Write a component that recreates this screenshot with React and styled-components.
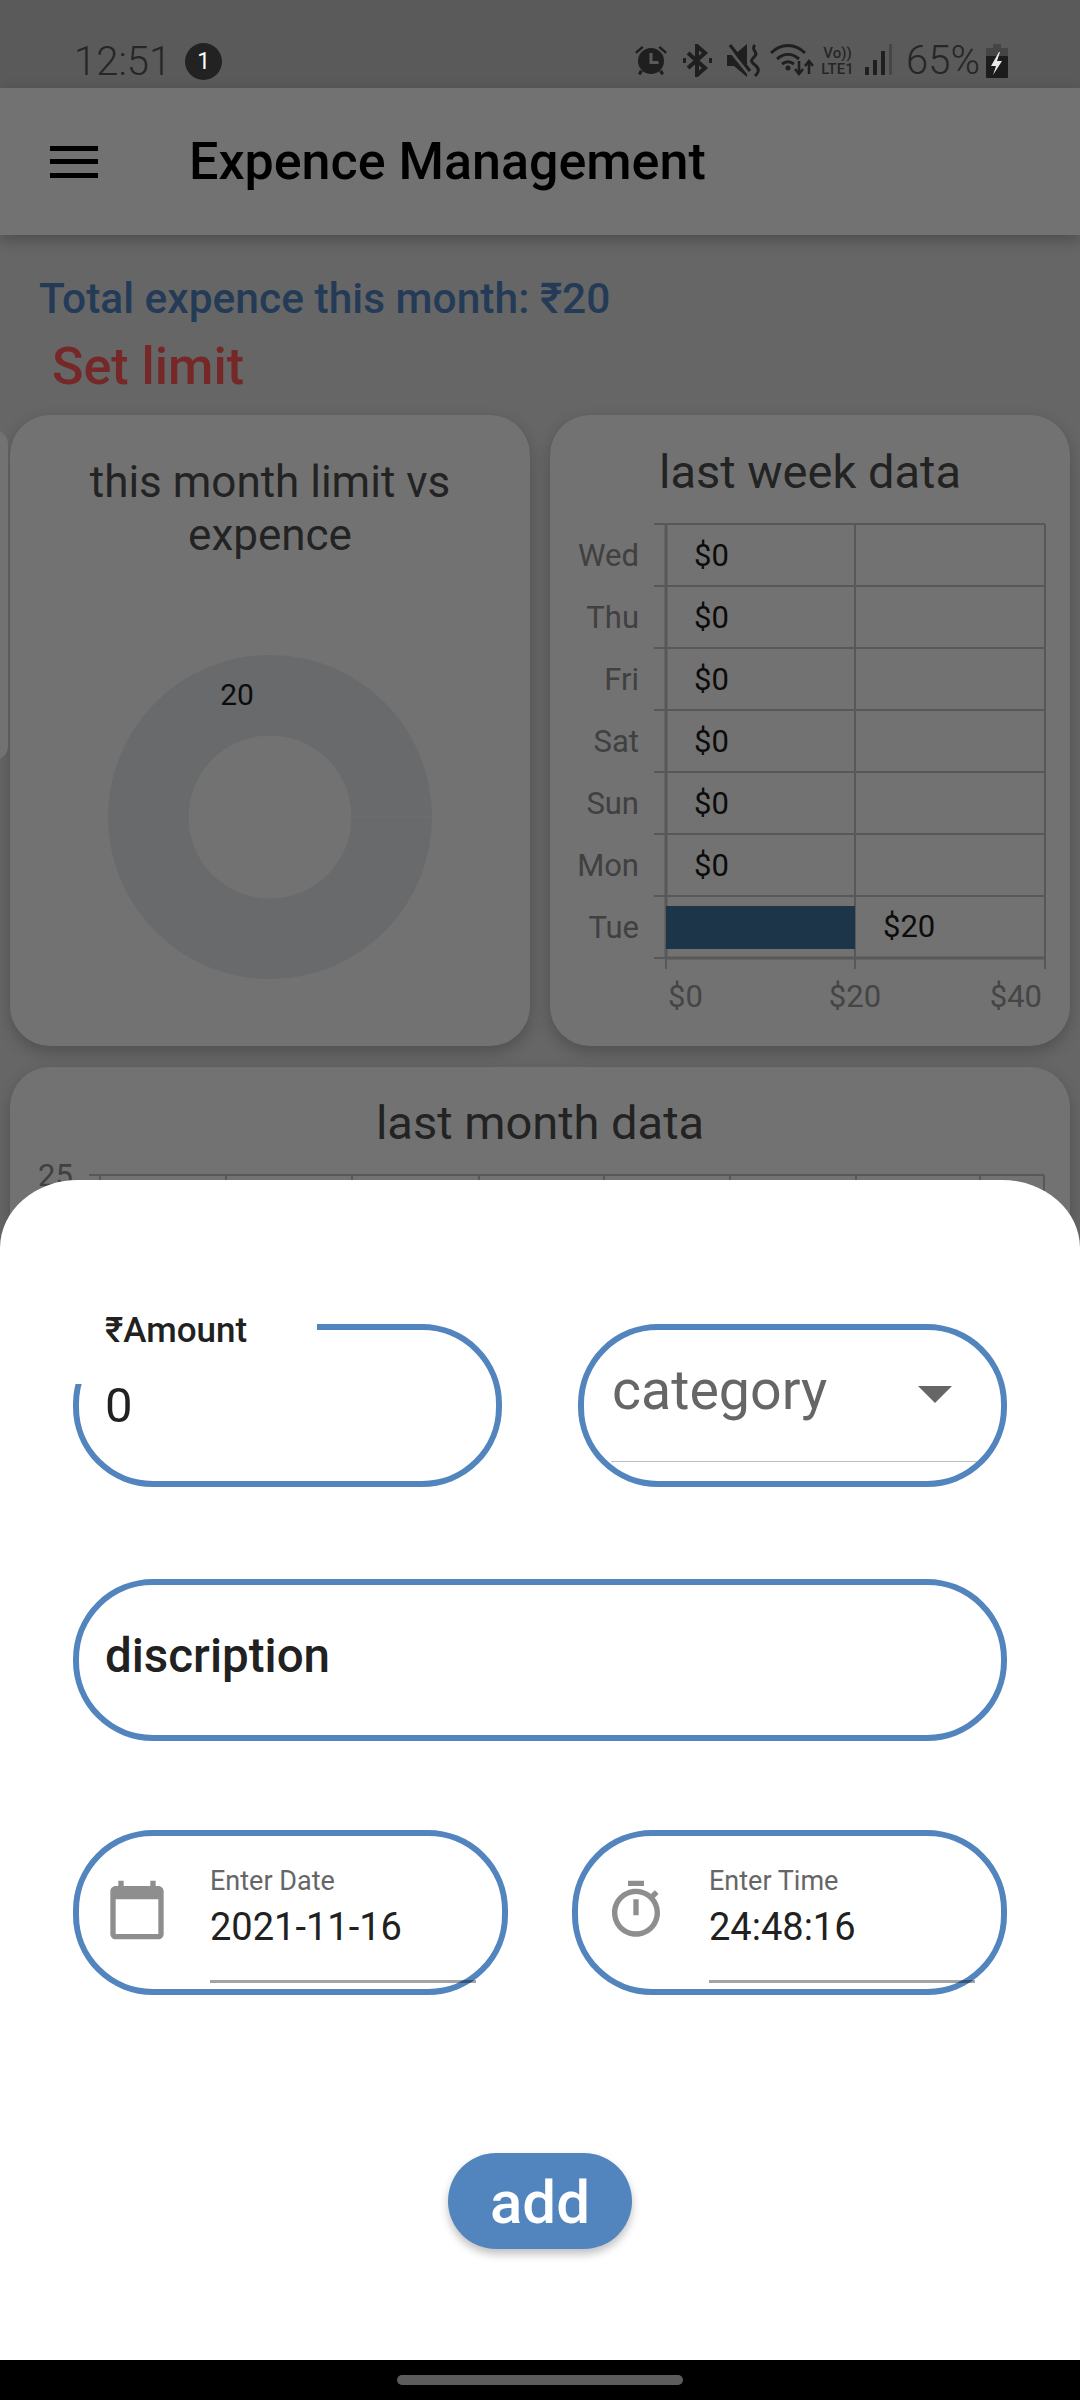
import React from 'react';
import styled, {createGlobalStyle} from 'styled-components';

const BLUE = '#5284be';
const DAYS = ['Wed', 'Thu', 'Fri', 'Sat', 'Sun', 'Mon', 'Tue'];

const GlobalStyle = createGlobalStyle`
  html, body { margin: 0; padding: 0; background: #000; }
  body { font-family: Roboto, "Noto Sans", sans-serif; }
  * { box-sizing: border-box; }
`;

const Screen = styled.div`
  position: relative;
  width: 1080px;
  height: 2400px;
  overflow: hidden;
  background: #666666;
`;

/* status bar */
const StatusBar = styled.div`
  height: 88px;
  padding: 43px 72px 0 74px;
  display: flex;
  align-items: flex-start;
  background: #5a5a5a;
  color: #262626;
`;

const Clock = styled.div`
  font-size: 40px;
  font-weight: 300;
  line-height: 37px;
`;

const Badge = styled.div`
  width: 37px;
  height: 37px;
  margin-left: 14px;
  border-radius: 50%;
  background: #222;
  color: #fff;
  font-size: 23px;
  line-height: 37px;
  text-align: center;
`;

const StatusIcons = styled.div`
  margin-left: auto;
  display: flex;
  align-items: flex-start;
  height: 36px;
  padding-top: 1px;
`;

const Slot = styled.span`
  display: block;
  margin-left: ${props => props.$gap || 0}px;
  svg { display: block; }
`;

const VoLte = styled.span`
  display: block;
  width: 39px;
  margin-left: 4px;
  margin-top: 1px;
  text-align: center;
  font-size: 15px;
  font-weight: 500;
  line-height: 16px;
  white-space: nowrap;
`;

const Percent = styled.span`
  display: block;
  margin-left: 14px;
  margin-top: -2px;
  font-size: 40px;
  font-weight: 300;
  line-height: 38px;
`;

/* app bar */
const AppBar = styled.div`
  position: relative;
  height: 147px;
  padding-left: 50px;
  display: flex;
  align-items: center;
  background: #727272;
  box-shadow: 0 5px 14px rgba(0, 0, 0, 0.25);
`;

const MenuIcon = styled.div`
  width: 48px;
  height: 32px;
  display: flex;
  flex-direction: column;
  justify-content: space-between;
  span {
    height: 5px;
    background: #000;
  }
`;

const Title = styled.div`
  margin-left: 91px;
  font-size: 52px;
  font-weight: 500;
  color: #000;
`;

/* summary */
const Summary = styled.div`
  padding: 41px 0 0 39px;
  height: 180px;
`;

const TotalText = styled.div`
  font-size: 42.5px;
  font-weight: 500;
  line-height: 45px;
  color: #243b58;
`;

const SetLimit = styled.div`
  margin: 17px 0 0 13px;
  font-size: 52px;
  font-weight: 500;
  line-height: 58px;
  color: #762727;
`;

/* dashboard cards */
const EdgeCard = styled.div`
  position: absolute;
  left: -20px;
  top: 430px;
  width: 28px;
  height: 330px;
  border-radius: 14px;
  background: #727272;
`;

const CardGrid = styled.div`
  display: grid;
  grid-template-columns: 520px 520px;
  column-gap: 20px;
  padding: 0 10px;
`;

const Card = styled.div`
  height: ${props => props.$height}px;
  padding-top: ${props => props.$pad}px;
  border-radius: 40px;
  background: #727272;
  box-shadow: 0 6px 16px rgba(0, 0, 0, 0.22);
  text-align: center;
  color: #232323;
  font-size: ${props => props.$font || 44}px;
  line-height: 53px;
`;

const WideCard = styled(Card)`
  margin: 21px 10px 0;
  svg { display: block; margin-top: 10px; }
`;

const ChartSvg = styled.svg`
  display: block;
  margin: ${props => props.$top}px auto 0;
`;

const Donut = () => (
  <ChartSvg $top={93} width="324" height="324" viewBox="0 0 324 324">
    <path
      fillRule="evenodd"
      fill="#696a6c"
      d="M162 0a162 162 0 1 1 0 324a162 162 0 1 1 0-324zM162 80.5a81.5 81.5 0 1 0 0 163a81.5 81.5 0 1 0 0-163z"
    />
    <line x1="243" y1="162" x2="324" y2="162" stroke="#6f6f70" strokeWidth="1" />
    <text x="129" y="50" textAnchor="middle" fontSize="30" fontFamily="Roboto" fill="#0c0c0c">20</text>
  </ChartSvg>
);

const WeekChart = () => {
  const rows = DAYS.map((d, i) => 26 + i * 62);
  return (
    <ChartSvg $top={0} width="520" height="530" viewBox="0 0 520 530">
      <g stroke="#585858" strokeWidth="2" fill="none">
        {[...rows, 26 + 7 * 62].map(y => (
          <line key={y} x1="104" y1={y} x2="495" y2={y} />
        ))}
        <line x1="116" y1="26" x2="116" y2="460" strokeWidth="3" />
        <line x1="305" y1="26" x2="305" y2="471" />
        <line x1="495" y1="26" x2="495" y2="471" />
        <line x1="116" y1="460" x2="116" y2="471" />
        <line x1="116" y1="460" x2="495" y2="460" strokeWidth="3" />
      </g>
      <rect x="116" y="408" width="189" height="43" fill="#1d3549" />
      <g fontFamily="Roboto" fontSize="31">
        {DAYS.map((d, i) => (
          <text key={d} x="89" y={68 + i * 62} textAnchor="end" fill="#404040">{d}</text>
        ))}
        {DAYS.slice(0, 6).map((d, i) => (
          <text key={d} x="144" y={68 + i * 62} fill="#0c0c0c">$0</text>
        ))}
        <text x="333" y="439" fill="#0c0c0c">$20</text>
        <text x="118" y="509" fill="#454545">$0</text>
        <text x="305" y="509" textAnchor="middle" fill="#454545">$20</text>
        <text x="492" y="509" textAnchor="end" fill="#454545">$40</text>
      </g>
    </ChartSvg>
  );
};

const MonthChart = () => (
  <svg width="1060" height="60" viewBox="0 0 1060 60">
    <g stroke="#585858" strokeWidth="2">
      <line x1="79" y1="16" x2="1034" y2="16" />
      {[90, 216, 342, 469, 594, 720, 846, 970, 1034].map(x => (
        <line key={x} x1={x} y1="16" x2={x} y2="60" />
      ))}
    </g>
    <text x="28" y="27" fontFamily="Roboto" fontSize="31" fill="#404040">25</text>
  </svg>
);

/* bottom sheet */
const Sheet = styled.div`
  position: absolute;
  left: 0;
  right: 0;
  top: 1180px;
  bottom: 40px;
  padding: 144px 73px 0;
  background: #fff;
  border-radius: 78px 78px 0 0 / 68px 68px 0 0;
`;

const FieldRow = styled.div`
  display: grid;
  grid-template-columns: ${props => props.$cols};
  column-gap: ${props => props.$gap || 0}px;
  margin-top: ${props => props.$top || 0}px;
`;

const Pill = styled.div`
  position: relative;
  height: ${props => props.$height}px;
  border: 6px solid ${BLUE};
  border-radius: 80px;
  background: #fff;
`;

const TextPill = styled(Pill)`
  display: flex;
  align-items: center;
  padding-left: 26px;
  color: #212121;
`;

const AmountValue = styled.div`
  font-size: 49px;
`;

const DescriptionValue = styled.div`
  margin-bottom: 8px;
  font-size: 47.5px;
  font-weight: 500;
`;

const FloatLabel = styled.div`
  position: absolute;
  left: -14px;
  top: -19px;
  width: 252px;
  height: 73px;
  padding-left: 40px;
  background: #fff;
  color: #212121;
  font-size: 35px;
  font-weight: 500;
  line-height: 39px;
`;

const SelectBox = styled.div`
  height: 132px;
  margin-left: 27px;
  width: 366px;
  padding: 29px 25px 0 1px;
  display: flex;
  justify-content: space-between;
  border-bottom: 1.5px solid #bdbdbd;
`;

const SelectText = styled.div`
  font-size: 55.5px;
  line-height: 63px;
  color: #666;
`;

const Caret = styled.div`
  width: 0;
  height: 0;
  margin-top: 27px;
  border-left: 17px solid transparent;
  border-right: 17px solid transparent;
  border-top: 17px solid #666;
`;

const PickerPill = styled(Pill)`
  display: flex;
  align-items: flex-start;
  padding: 29px 0 0 26px;
  svg {
    flex: none;
    margin-top: 13px;
    fill: #8e8e8e;
  }
`;

const PickerText = styled.div`
  width: 266px;
  height: 118px;
  margin-left: 41px;
  border-bottom: 3px solid rgba(0, 0, 0, 0.36);
`;

const PickerLabel = styled.div`
  font-size: 27px;
  line-height: 32px;
  color: #666;
`;

const PickerValue = styled.div`
  margin-top: 8px;
  font-size: 38px;
  line-height: 44px;
  color: #212121;
`;

const AddButton = styled.button`
  display: block;
  width: 184px;
  height: 96px;
  margin: 158px auto 0;
  padding: 3px 0 0;
  border: 0;
  border-radius: 48px;
  background: ${BLUE};
  box-shadow: 0 5px 8px rgba(0, 0, 0, 0.25);
  color: #fff;
  font-family: inherit;
  font-size: 60px;
  font-weight: 500;
`;

/* gesture bar */
const NavBar = styled.div`
  position: absolute;
  left: 0;
  right: 0;
  bottom: 0;
  height: 40px;
  padding-top: 15px;
  background: #000;
`;

const HomePill = styled.div`
  width: 286px;
  height: 10px;
  margin: 0 auto;
  border-radius: 5px;
  background: #5c5c5c;
`;

const AlarmIcon = () => (
  <svg width="34" height="32" viewBox="0 0 34 32" fill="#1f1f1f">
    <circle cx="17" cy="17" r="13" />
    <path d="M1 8L8 2l1.600 1.800-7 6zM33 8l-7-6-1.600 1.800 7 6zM6 26l3 1.600-2.600 3.600-2.400-1.600zM28 26l-3 1.600 2.600 3.600 2.400-1.600z" />
    <path d="M15.500 9h3v8h6v3h-9z" fill="#5a5a5a" />
  </svg>
);

const BluetoothIcon = () => (
  <svg width="29" height="33" viewBox="0 0 29 33" fill="none" stroke="#1f1f1f" strokeWidth="4">
    <path d="M5 9l17 15-8 7V2l8 7L5 24" />
    <path d="M0 16.500h3M26 16.500h3" strokeWidth="5" />
  </svg>
);

const MuteIcon = () => (
  <svg width="33" height="33" viewBox="0 0 33 33">
    <path d="M0 11h7l13-11v33L7 22H0z" fill="#1f1f1f" />
    <path d="M0 3l22 27" stroke="#5a5a5a" strokeWidth="3" />
    <path d="M3 1l20 26" stroke="#1f1f1f" strokeWidth="3" />
    <path d="M28 1c-5 5 4 7 0 11s-5 5 0 9 4 7 0 11" fill="none" stroke="#1f1f1f" strokeWidth="3" />
  </svg>
);

const WifiIcon = () => (
  <svg width="44" height="32" viewBox="0 0 44 32" fill="none" stroke="#1f1f1f" strokeWidth="3">
    <path d="M1 9c10-10 24-10 34 0M7 15c7-6 15-6 22 0M12 20c4-3 8-3 12 0" />
    <circle cx="18" cy="24" r="2.500" fill="#1f1f1f" stroke="none" />
    <path d="M29 17v13M25 25l4 5 4-5M39 30V17M35 22l4-5 4 5" strokeWidth="2.500" />
  </svg>
);

const SignalIcon = () => (
  <svg width="27" height="31" viewBox="0 0 27 31">
    <rect x="0" y="23" width="4" height="8" fill="#1f1f1f" />
    <rect x="8" y="16" width="4" height="15" fill="#1f1f1f" />
    <rect x="16" y="7" width="4" height="24" fill="#1f1f1f" />
    <rect x="24" y="0" width="3" height="31" fill="#464646" />
  </svg>
);

const BatteryIcon = () => (
  <svg width="22" height="34" viewBox="0 0 22 34">
    <path d="M7 0h8v4h7v10H0V4h7z" fill="#454545" />
    <rect x="0" y="12" width="22" height="22" rx="1" fill="#1c1c1c" />
    <path d="M13 8l-8 14h5l-3 9 9-14h-5l3-9z" fill="#e8e8e8" />
  </svg>
);

const CalendarIcon = () => (
  <svg width="64" height="64" viewBox="0 0 24 24">
    <path d="M20 3h-1V1h-2v2H7V1H5v2H4c-1.100 0-2 .900-2 2v16c0 1.100.900 2 2 2h16c1.100 0 2-.900 2-2V5c0-1.100-.900-2-2-2zm0 18H4V8h16v13z" />
  </svg>
);

const TimerIcon = () => (
  <svg width="64" height="64" viewBox="0 0 24 24">
    <path d="M9 1h6v2H9zm10.030 6.390l1.420-1.420c-.430-.510-.900-.990-1.410-1.410l-1.420 1.420C16.070 4.740 14.120 4 12 4c-4.970 0-9 4.030-9 9s4.020 9 9 9 9-4.030 9-9c0-2.120-.740-4.070-1.970-5.610zM12 20c-3.870 0-7-3.130-7-7s3.130-7 7-7 7 3.130 7 7-3.130 7-7 7zm-1-12h2v6h-2z" />
  </svg>
);

export default function App() {
  return (
    <Screen>
      <GlobalStyle />
      <StatusBar>
        <Clock>12:51</Clock>
        <Badge>1</Badge>
        <StatusIcons>
          <Slot><AlarmIcon /></Slot>
          <Slot $gap={15}><BluetoothIcon /></Slot>
          <Slot $gap={15}><MuteIcon /></Slot>
          <Slot $gap={10}><WifiIcon /></Slot>
          <VoLte>Vo))<br />LTE1</VoLte>
          <Slot $gap={8}><SignalIcon /></Slot>
          <Percent>65%</Percent>
          <Slot $gap={6}><BatteryIcon /></Slot>
        </StatusIcons>
      </StatusBar>
      <AppBar>
        <MenuIcon><span /><span /><span /></MenuIcon>
        <Title>Expence Management</Title>
      </AppBar>
      <Summary>
        <TotalText>Total expence this month: ₹20</TotalText>
        <SetLimit>Set limit</SetLimit>
      </Summary>
      <EdgeCard />
      <CardGrid>
        <Card $height={631} $pad={41}>
          this month limit vs<br />expence
          <Donut />
        </Card>
        <Card $height={631} $pad={30} $font={47}>
          last week data
          <WeekChart />
        </Card>
      </CardGrid>
      <WideCard $height={400} $pad={29} $font={47}>
        last month data
        <MonthChart />
      </WideCard>

      <Sheet>
        <FieldRow $cols="429px 429px" $gap={76}>
          <TextPill $height={163}>
            <FloatLabel>₹Amount</FloatLabel>
            <AmountValue>0</AmountValue>
          </TextPill>
          <Pill $height={163}>
            <SelectBox>
              <SelectText>category</SelectText>
              <Caret />
            </SelectBox>
          </Pill>
        </FieldRow>
        <FieldRow $cols="934px" $top={92}>
          <TextPill $height={162}>
            <DescriptionValue>discription</DescriptionValue>
          </TextPill>
        </FieldRow>
        <FieldRow $cols="435px 435px" $gap={64} $top={89}>
          <PickerPill $height={165}>
            <CalendarIcon />
            <PickerText>
              <PickerLabel>Enter Date</PickerLabel>
              <PickerValue>2021-11-16</PickerValue>
            </PickerText>
          </PickerPill>
          <PickerPill $height={165}>
            <TimerIcon />
            <PickerText>
              <PickerLabel>Enter Time</PickerLabel>
              <PickerValue>24:48:16</PickerValue>
            </PickerText>
          </PickerPill>
        </FieldRow>
        <AddButton>add</AddButton>
      </Sheet>
      <NavBar><HomePill /></NavBar>
    </Screen>
  );
}
